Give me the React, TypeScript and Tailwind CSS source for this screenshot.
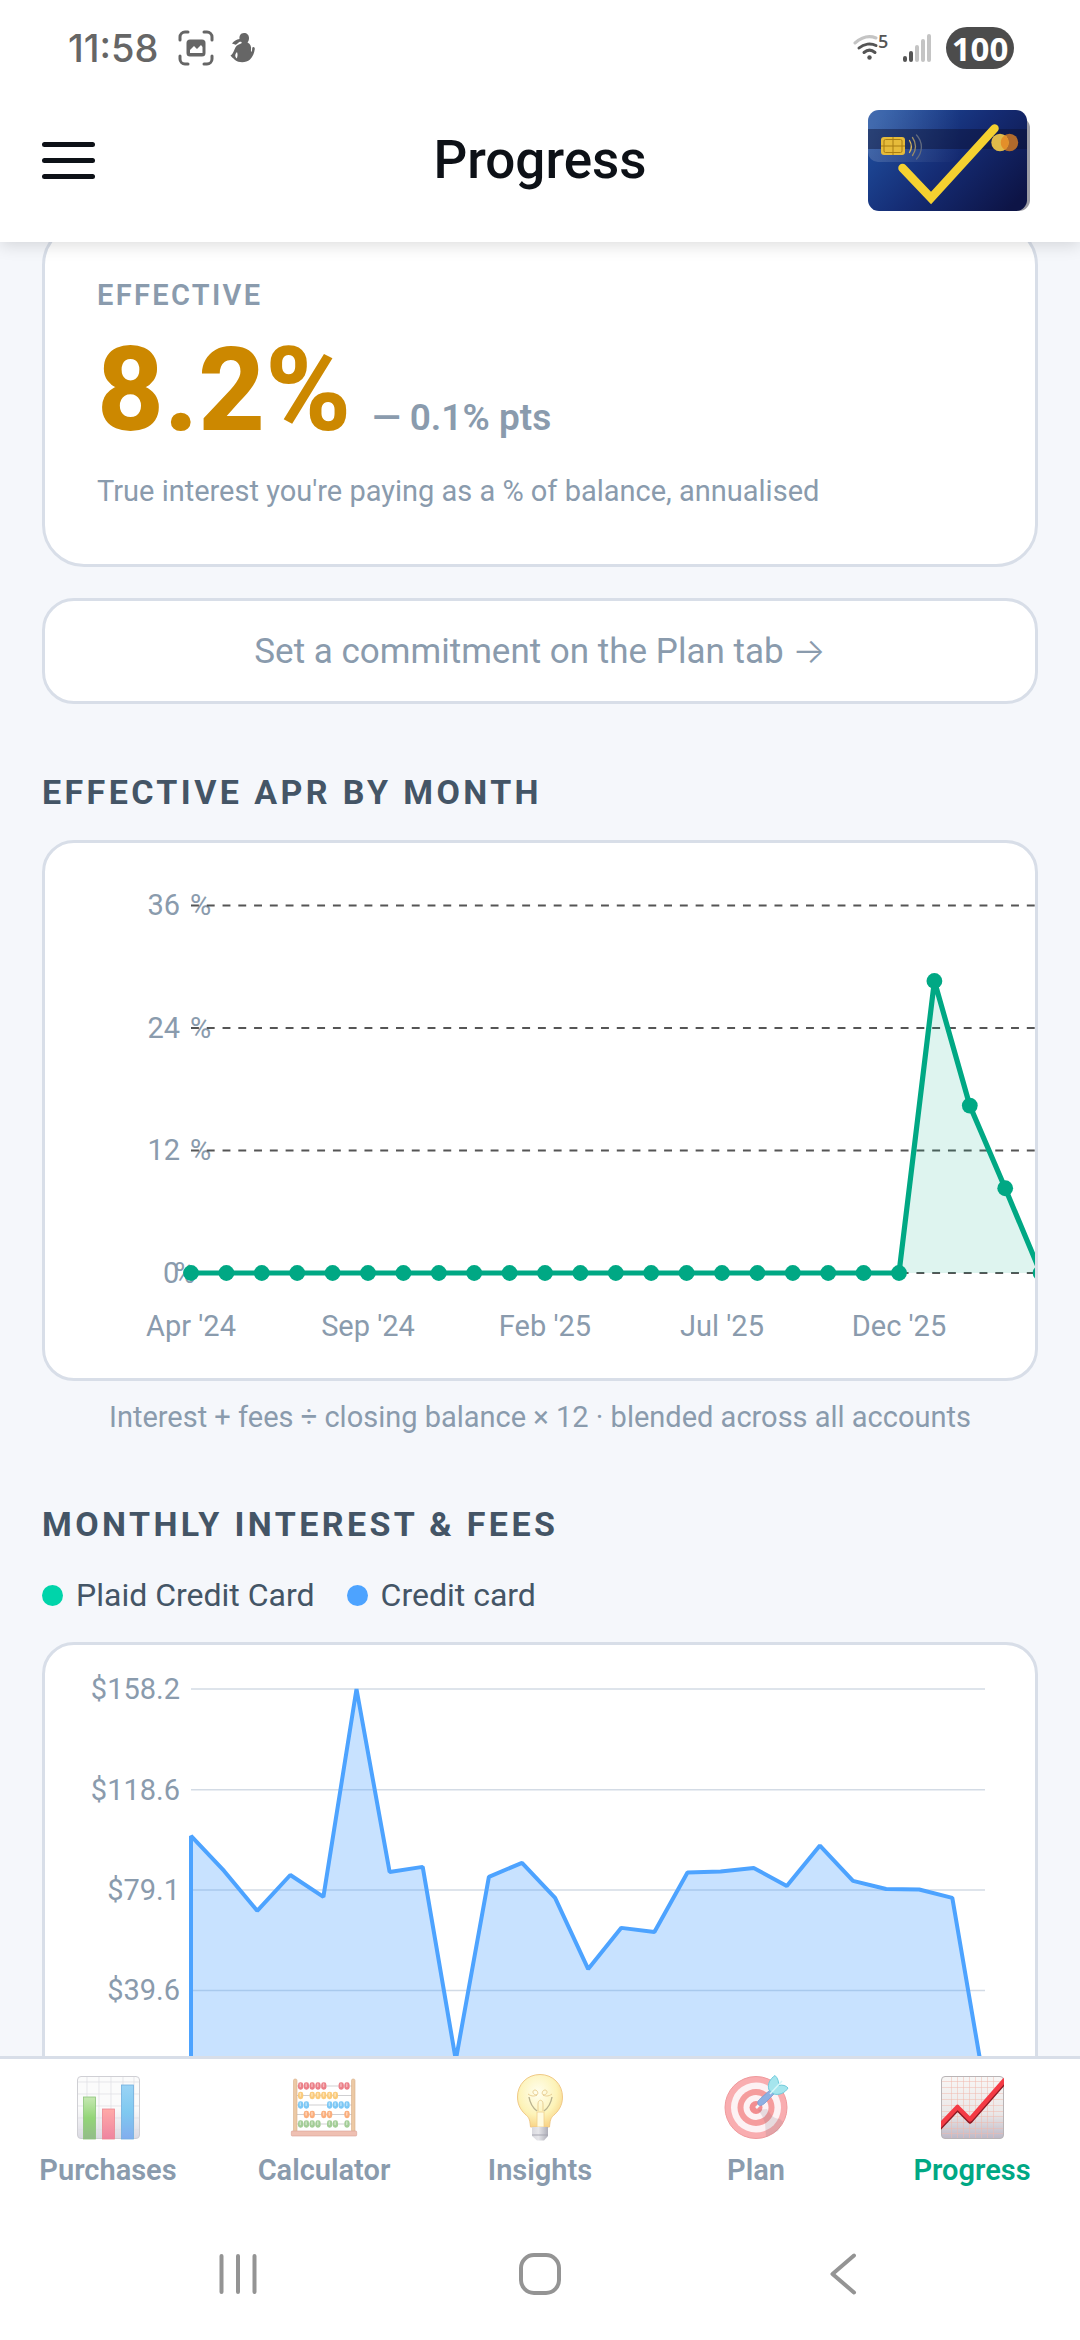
import React from 'react';

const aprByMonth = [
    0, 0, 0, 0, 0, 0, 0, 0, 0, 0, 0, 0, 0,
    0, 0, 0, 0, 0, 0, 0, 0, 28.6, 16.4, 8.3, 0,
];

const interestByMonth = [
    100.4, 86.6, 70.9, 85, 76.4, 158.2, 86.2, 88.2, 12.2, 84.3, 89.8, 76, 48,
    64.2, 62.6, 86, 86.4, 87.8, 80.7, 96.6, 82.7, 79.5, 79.3, 76, 0,
];

// ---------- Status bar ----------

const StatusBar: React.FC = () => (
    <div className="flex h-24 items-center justify-between pl-[68px] pr-[66px]">
        <div className="flex items-center gap-4 text-[#666666]">
            <span className="mr-1 font-['Inter'] text-[38px] leading-none font-medium">11:58</span>
            <svg width="36" height="36" viewBox="0 0 36 36" fill="none" aria-hidden="true">
                <path
                    d="M10 2H7a5 5 0 0 0-5 5v3M26 2h3a5 5 0 0 1 5 5v3M10 34H7a5 5 0 0 1-5-5v-3M26 34h3a5 5 0 0 0 5-5v-3"
                    stroke="currentColor"
                    strokeWidth="3"
                    strokeLinecap="round"
                />
                <rect x="8.500" y="9.500" width="19" height="17" rx="3.500" fill="currentColor" />
                <path d="M12 23v-3l4-4 3 3 4-4 1.500 2v6z" fill="#fff" />
            </svg>
            <svg width="26" height="30" viewBox="0 0 26 30" aria-hidden="true">
                <path
                    d="M14 0c3 0 5 2 5 5 0 2-.500 3-1.500 4.500 3 1.500 4 4 3.500 7.500-.200 2 .500 2.500 1 .500.300-1.500 0-2.500.500-3 1-1 2.500 0 2.300 1.500-.500 4-2 8-4.800 10.500-4 3.500-11 3.500-15 .500C3 25 1 23.500.500 22.500c2-1 3-3.500 4-6C5.500 13.500 7.500 11.500 10 11c1.500-.500 2-1 1.500-2-1.500-.500-2.500 0-4 1.500-1 1-1.500 1.500-2.500 1L2 10.500C4 8 6.500 6.500 9.500 6 9 3 10.500 0 14 0z"
                    fill="currentColor"
                />
                <path d="M7 19c-2 2-2.500 4-.500 6.500 1-1 1.500-4 .500-6.500z" fill="#fff" />
            </svg>
        </div>
        <div className="flex items-center gap-[14px] text-[#555555]">
            <svg width="36" height="44" viewBox="0 -8 36 44" fill="none" aria-hidden="true">
                <path d="M2 9c8-7 15-7.500 21-5" stroke="#c4c4c4" strokeWidth="3" strokeLinecap="round" />
                <path d="M6 14c5-4.500 12-5 17-2.500M11 18.500c3.500-3 7.500-3 11 0" stroke="currentColor" strokeWidth="3" strokeLinecap="round" />
                <circle cx="16.500" cy="23.500" r="2.200" fill="currentColor" />
                <text x="25" y="14" fontSize="18" fontWeight="600" fill="currentColor" fontFamily="Open Sans, sans-serif">5</text>
            </svg>
            <svg width="29" height="30" viewBox="0 0 29 30" strokeWidth="4" strokeLinecap="round" aria-hidden="true">
                <path d="M2 25v2M8 20v7" stroke="#555" />
                <path d="M14 14v13M20 8v19M26 3v24" stroke="#c4c4c4" />
            </svg>
            <span className="flex h-[42px] w-[68px] items-center justify-center rounded-full bg-[#4c4c4c] font-['Open_Sans'] text-[33px] leading-none font-bold text-white">
                100
            </span>
        </div>
    </div>
);

// ---------- Header ----------

const CardLogo: React.FC = () => (
    <svg width="162" height="102" viewBox="0 0 162 102" role="img" aria-label="Card logo">
        <defs>
            <linearGradient id="cardBody" x1="0" y1="0.200" x2="1" y2="0.800">
                <stop offset="0" stopColor="#1f4f9f" />
                <stop offset="0.500" stopColor="#152c74" />
                <stop offset="1" stopColor="#0d1446" />
            </linearGradient>
            <linearGradient id="cardShine" x1="0" y1="0" x2="1" y2="0">
                <stop offset="0" stopColor="#fff" stopOpacity="0.160" />
                <stop offset="1" stopColor="#fff" stopOpacity="0" />
            </linearGradient>
            <clipPath id="cardClip">
                <rect y="1" width="159" height="101" rx="11" />
            </clipPath>
        </defs>
        <rect x="6" y="8" width="156" height="94" rx="11" fill="#9c9ca4" />
        <rect y="1" width="159" height="101" rx="11" fill="url(#cardBody)" />
        <g clipPath="url(#cardClip)">
            <rect x="0" y="-10" width="92" height="63" rx="10" fill="url(#cardShine)" />
            <rect y="20" width="159" height="20" fill="#0a1030" fillOpacity="0.450" />
        </g>
        <g stroke="#a87d12" strokeWidth="1">
            <rect x="13" y="28" width="24" height="18" rx="3" fill="#e6bb3a" stroke="none" />
            <rect x="16" y="30.500" width="18" height="13" rx="1.500" fill="none" />
            <path d="M25 28v18M13 37h24" />
        </g>
        <g fill="none" strokeLinecap="round" strokeWidth="1.300">
            <path d="M41.500 31.500c2.500 4 2.500 8 0 12" stroke="#d6b65a" />
            <path d="M44.500 28.500c4 5.500 4 12.500 0 18" stroke="#9a8c66" />
            <path d="M48.500 26c6.500 7 6.500 17 0 24" stroke="#616b80" />
        </g>
        <circle cx="141.500" cy="33.500" r="8.700" fill="#b06a2c" />
        <circle cx="132" cy="33.500" r="8.700" fill="#dfba4a" />
        <path d="M136.750 26.200a8.700 8.700 0 0 1 0 14.600 8.700 8.700 0 0 1 0-14.600z" fill="#e38f2a" />
        <path d="M34.500 59 63 89 126.500 19.500" fill="none" stroke="#f5d130" strokeWidth="8.500" strokeLinecap="round" />
    </svg>
);

const Header: React.FC = () => (
    <header className="relative z-10 shrink-0 bg-white shadow-[0_3px_16px_rgba(0,0,0,0.14)]">
        <StatusBar />
        <div className="grid h-[146px] grid-cols-[1fr_auto_1fr] items-center px-[42px] pb-[18px]">
            <button type="button" aria-label="Menu" className="flex w-[53px] flex-col gap-[11px]">
                <span className="h-[5px] rounded-full bg-[#0d1117]" />
                <span className="h-[5px] rounded-full bg-[#0d1117]" />
                <span className="h-[5px] rounded-full bg-[#0d1117]" />
            </button>
            <h1 className="text-[53px] leading-[62px] font-medium text-[#0d1117]">Progress</h1>
            <div className="mr-2 justify-self-end">
                <CardLogo />
            </div>
        </div>
    </header>
);

// ---------- Charts ----------

const AprChart: React.FC = () => {
    const left = 146;
    const bottom = 430;
    const x = (i: number) => left + i * 35.4;
    const y = (v: number) => bottom - v * 10.21;
    const points = aprByMonth.map((v, i) => `${x(i)},${y(v)}`).join(' ');
    const months = ["Apr '24", "Sep '24", "Feb '25", "Jul '25", "Dec '25"];

    return (
        <svg viewBox="0 0 990 535" className="block w-full" role="img" aria-label="Effective APR by month">
            <g fill="#8a9bad" fontSize="29">
                {[36, 24, 12].map((v) => (
                    <React.Fragment key={v}>
                        <text x="135" y={y(v) + 10} textAnchor="end">{v}</text>
                        <text x="145" y={y(v) + 10}>%</text>
                    </React.Fragment>
                ))}
                <text x="118" y="440">0</text>
                <text x="129" y="440">%</text>
                {months.map((m, i) => (
                    <text key={m} x={x(i * 5)} y="493" textAnchor="middle">{m}</text>
                ))}
            </g>
            {[0, 12, 24, 36].map((v) => (
                <line key={v} x1={left} x2="990" y1={y(v)} y2={y(v)} stroke="#555" strokeWidth="2" strokeDasharray="7.900 7.870" />
            ))}
            <polygon points={`${left},${bottom} ${points}`} fill="#00a884" fillOpacity="0.130" />
            <polyline points={points} fill="none" stroke="#00a884" strokeWidth="5.200" />
            {aprByMonth.map((v, i) => (
                <circle key={i} cx={x(i)} cy={y(v)} r="7.900" fill="#00a884" />
            ))}
        </svg>
    );
};

const InterestChart: React.FC = () => {
    const left = 146;
    const bottom = 446;
    const x = (i: number) => left + i * 33.1;
    const y = (v: number) => bottom - v * 2.541;
    const points = interestByMonth.map((v, i) => `${x(i)},${y(v)}`).join(' ');

    return (
        <svg viewBox="0 0 990 500" className="block w-full" role="img" aria-label="Monthly interest and fees">
            {[158.2, 118.6, 79.1, 39.6].map((v) => (
                <g key={v}>
                    <text x="135" y={y(v) + 10} textAnchor="end" fill="#8a9bad" fontSize="29">${v}</text>
                    <line x1={left} x2="940" y1={y(v)} y2={y(v)} stroke="#d3dbe5" strokeWidth="1.500" />
                </g>
            ))}
            <polygon
                points={`${left},${bottom} ${points}`}
                fill="#4da3ff"
                fillOpacity="0.310"
                stroke="#4da3ff"
                strokeWidth="4"
                strokeLinejoin="bevel"
            />
        </svg>
    );
};

// ---------- Tab icons ----------

const PurchasesIcon: React.FC = () => (
    <svg width="72" height="72" viewBox="0 0 72 72" aria-hidden="true">
        <defs>
            <linearGradient id="pBg" x1="0" y1="0" x2="0" y2="1">
                <stop offset="0.500" stopColor="#fbfbfb" />
                <stop offset="1" stopColor="#dbdae3" />
            </linearGradient>
            <linearGradient id="pGreen" x1="0" y1="0" x2="0" y2="1">
                <stop offset="0" stopColor="#c6e8b2" />
                <stop offset="0.500" stopColor="#93d577" />
                <stop offset="1" stopColor="#93bb8a" />
            </linearGradient>
            <linearGradient id="pRed" x1="0" y1="0" x2="0" y2="1">
                <stop offset="0" stopColor="#ffaaa8" />
                <stop offset="1" stopColor="#ee84a0" />
            </linearGradient>
            <linearGradient id="pBlue" x1="0" y1="0" x2="0" y2="1">
                <stop offset="0" stopColor="#9ad3f5" />
                <stop offset="0.500" stopColor="#7fc9f0" />
                <stop offset="1" stopColor="#82adee" />
            </linearGradient>
        </defs>
        <rect x="5.500" y="4.500" width="62" height="62" rx="3.500" fill="url(#pBg)" stroke="#cfcfd4" />
        <path
            d="M15 5v61M27 5v61M39 5v61M51 5v61M62 5v61M6 10h61M6 22h61M6 34h61M6 46h61M6 58h61"
            stroke="#dedee4"
            strokeWidth="0.700"
        />
        <rect x="11.500" y="25" width="12" height="42" fill="url(#pGreen)" stroke="#8cc47b" strokeWidth="0.800" />
        <rect x="30.500" y="37" width="12" height="30" fill="url(#pRed)" stroke="#ec8590" strokeWidth="0.800" />
        <rect x="49.500" y="13" width="12" height="54" fill="url(#pBlue)" stroke="#70aede" strokeWidth="0.800" />
    </svg>
);

// Bead slots taken on each rod, from left to right
const abacusRows = [
    { y: 14, color: '#ec7f88', beads: [0, 1, 2, 3, 4, 7, 8] },
    { y: 23.5, color: '#fbcb7b', beads: [0, 2, 3, 4, 5, 6] },
    { y: 33, color: '#7cc8f6', beads: [0, 1, 5, 6, 7, 8] },
    { y: 42.5, color: '#fbae7c', beads: [1, 2, 4, 5, 8] },
    { y: 52, color: '#a3cd97', beads: [0, 1, 2, 3, 5, 6, 8] },
];

const CalculatorIcon: React.FC = () => (
    <svg width="72" height="72" viewBox="0 0 72 72" aria-hidden="true">
        {abacusRows.map((row) => (
            <g key={row.y}>
                <line x1="8" x2="64" y1={row.y} y2={row.y} stroke="#cfcfd2" strokeWidth="1.200" />
                {row.beads.map((b) => (
                    <g key={b}>
                        <rect x={10 + b * 5.8} y={row.y - 3.7} width="5.200" height="7.400" rx="2.400" fill={row.color} />
                        <rect x={11.6 + b * 5.8} y={row.y - 2.7} width="1.500" height="4" rx="0.700" fill="#fff" fillOpacity="0.450" />
                    </g>
                ))}
            </g>
        ))}
        <rect x="5.500" y="7" width="3.500" height="53" rx="1.500" fill="#ecc9a4" stroke="#d8ae8a" strokeWidth="0.600" />
        <rect x="63.500" y="7" width="3.500" height="53" rx="1.500" fill="#ecc9a4" stroke="#d8ae8a" strokeWidth="0.600" />
        <rect x="3.300" y="59" width="65.400" height="5" rx="1" fill="#efc0b2" stroke="#d9a093" strokeWidth="0.600" />
    </svg>
);

const InsightsIcon: React.FC = () => (
    <svg width="72" height="72" viewBox="0 0 72 72" aria-hidden="true">
        <defs>
            <radialGradient id="bulb" cx="0.450" cy="0.350" r="0.650">
                <stop offset="0" stopColor="#fffef0" />
                <stop offset="0.650" stopColor="#fdf3b8" />
                <stop offset="1" stopColor="#f9d588" />
            </radialGradient>
            <linearGradient id="bulbBase" x1="0" y1="0" x2="1" y2="0">
                <stop offset="0" stopColor="#d8d8de" />
                <stop offset="0.400" stopColor="#e6e6ea" />
                <stop offset="1" stopColor="#aeaeb8" />
            </linearGradient>
        </defs>
        <path
            d="M36 2.500C23 2.500 13.500 12.500 13.500 25c0 9 4.500 14.500 9 18.500 3 2.500 3.500 5.500 4 11.500h19c.500-6 1-9 4-11.500 4.500-4 9-9.500 9-18.500C58.500 12.500 49 2.500 36 2.500z"
            fill="url(#bulb)"
            stroke="#f0c987"
        />
        <path d="M33 40h7v15h-7z" fill="#fffbe0" stroke="#f1d18a" strokeWidth="0.800" />
        <path d="M24 22c4 3 7 2 9 1-5 0-5-5-2-5s4 5 1 5M48 22c-4 3-7 2-9 1 5 0 5-5 2-5s-4 5-1 5M34 32c0-5 5-5 5 0v7M34 32v7" fill="none" stroke="#e9cf94" />
        <path d="M25 25c1 6 4 11 8 14M48 25c-1 6-4 11-8 14" fill="none" stroke="#b9b28f" strokeWidth="1.400" />
        <path d="M28 55h16v9l-4 4.500h-7L28 64z" fill="url(#bulbBase)" />
        <path d="M28 63h16" stroke="#a5a5b0" />
    </svg>
);

const PlanIcon: React.FC = () => (
    <svg width="72" height="72" viewBox="0 0 72 72" aria-hidden="true">
        <circle cx="36" cy="35.500" r="31" fill="#f9adb0" stroke="#ef9a9d" />
        <circle cx="36" cy="35.500" r="25" fill="#fdf2f4" />
        <circle cx="36" cy="35.500" r="18.500" fill="#f59c9d" />
        <circle cx="36" cy="35.500" r="12.500" fill="#fdf2f4" />
        <circle cx="36" cy="35.500" r="6.500" fill="#f28d90" />
        <path d="M38 38l9-1c4 6 7 10 13 10l3 3-5 9-12 6-1-14c-2-6-3-8-7-13z" fill="#8a7f88" fillOpacity="0.200" />
        <path d="M36 36l6-6" stroke="#f7f7fa" strokeWidth="2.500" />
        <path d="M38 32c-1-3 1-4 3-6l9-8 4 4-9 9c-2 2-6 4-7 1z" fill="#8fb0e2" stroke="#7a9bd2" strokeWidth="0.800" />
        <path d="M49 18c-2-6 1-11 6-14.500 3 2.500 4 7 3.500 10 4-1 7.500 0 9.500 2.500-3 5-9 7.500-14 6z" fill="#a5e5ed" stroke="#70cbdc" />
        <path d="M50 22l12-13" stroke="#d6f6f8" strokeWidth="1.500" />
    </svg>
);

const ProgressIcon: React.FC = () => (
    <svg width="72" height="72" viewBox="0 0 72 72" aria-hidden="true">
        <defs>
            <linearGradient id="gBg" x1="0" y1="0" x2="0" y2="1">
                <stop offset="0" stopColor="#f8f6f5" />
                <stop offset="0.600" stopColor="#eae7e7" />
                <stop offset="1" stopColor="#bdb8c6" />
            </linearGradient>
            <clipPath id="gClip">
                <rect x="5" y="4" width="63" height="63" rx="4" />
            </clipPath>
        </defs>
        <rect x="5.500" y="4.500" width="62" height="62" rx="3.500" fill="url(#gBg)" stroke="#b9b4b6" />
        <path
            d="M15.500 5v61M21.500 5v61M27.500 5v61M33.500 5v61M39.500 5v61M45.500 5v61M51.500 5v61M57.500 5v61M6 9.500h61M6 15.500h61M6 21.500h61M6 27.500h61M6 33.500h61M6 39.500h61M6 44.500h61M6 50.500h61M6 56.500h61M6 61.500h61"
            stroke="#f0b9ac"
            strokeWidth="0.500"
        />
        <g clipPath="url(#gClip)" fill="none" strokeWidth="4.500" strokeLinejoin="round">
            <path d="M3 56.500 21.500 37 34 49.500 70 8.500" stroke="#8e1a24" />
            <path d="M3 54.500 21.500 35 34 47.500 70 6.500" stroke="#f43b45" />
        </g>
    </svg>
);

const tabs = [
    { label: 'Purchases', icon: <PurchasesIcon />, active: false },
    { label: 'Calculator', icon: <CalculatorIcon />, active: false },
    { label: 'Insights', icon: <InsightsIcon />, active: false },
    { label: 'Plan', icon: <PlanIcon />, active: false },
    { label: 'Progress', icon: <ProgressIcon />, active: true },
];

const TabBar: React.FC = () => (
    <nav className="grid shrink-0 grid-cols-5 border-t-[3px] border-[#d8dee8] bg-white pt-[13px] pb-[27px]">
        {tabs.map((tab) => (
            <button
                key={tab.label}
                type="button"
                aria-current={tab.active ? 'page' : undefined}
                className={`flex flex-col items-center gap-[9px] ${tab.active ? 'text-[#00a884]' : 'text-[#8a9bad]'}`}
            >
                {tab.icon}
                <span className="text-[29px] leading-[34px] font-semibold">{tab.label}</span>
            </button>
        ))}
    </nav>
);

const SystemBar: React.FC = () => (
    <div className="grid shrink-0 grid-cols-3 justify-items-center bg-white px-[87px] pt-[39px] pb-[45px] text-[#949494]">
        <button type="button" aria-label="Recent apps">
            <svg width="42" height="42" viewBox="0 0 42 42" stroke="currentColor" strokeWidth="4" strokeLinecap="round">
                <path d="M4.500 3v36M21 3v36M37.500 3v36" />
            </svg>
        </button>
        <button type="button" aria-label="Home">
            <svg width="42" height="42" viewBox="0 0 42 42" fill="none" stroke="currentColor" strokeWidth="4">
                <rect x="2" y="2" width="38" height="38" rx="13" />
            </svg>
        </button>
        <button type="button" aria-label="Back">
            <svg width="42" height="42" viewBox="0 0 42 42" fill="none" stroke="currentColor" strokeWidth="4" strokeLinecap="round" strokeLinejoin="round">
                <path d="M33 2.500 11.500 21 33 39.500" />
            </svg>
        </button>
    </div>
);

// ---------- Page ----------

const SectionTitle: React.FC<{ children: React.ReactNode }> = ({ children }) => (
    <h2 className="mt-[68px] mb-7 text-[34px] leading-10 font-bold tracking-widest text-[#445566]">{children}</h2>
);

const LegendItem: React.FC<{ dot: string; label: string }> = ({ dot, label }) => (
    <li className="flex items-center gap-[13px]">
        <span className={`size-[21px] rounded-full ${dot}`} />
        {label}
    </li>
);

export default function App() {
    return (
        <div className="flex h-screen flex-col bg-[#f5f7fb] font-['Roboto',sans-serif]">
            <Header />

            <main className="min-h-0 flex-1 overflow-hidden px-[42px]">
                <section className="-mt-[19px] rounded-[42px] border-[3px] border-[#d8dee8] bg-white px-[52px] pt-[52px] pb-[54px]">
                    <p className="text-[29px] leading-[34px] font-semibold tracking-[0.08em] text-[#8a9bad]">EFFECTIVE</p>
                    <div className="mt-[10px] flex items-baseline gap-[21px]">
                        <span className="text-[116px] leading-[136px] font-extrabold text-[#cc8800]">8.2%</span>
                        <span className="text-[37px] font-semibold text-[#8a9bad]">— 0.1% pts</span>
                    </div>
                    <p className="mt-[14px] text-[29px] leading-[38px] text-[#8a9bad]">
                        True interest you're paying as a % of balance, annualised
                    </p>
                </section>

                <button
                    type="button"
                    className="mt-[31px] w-full rounded-[32px] border-[3px] border-[#d8dee8] bg-white py-[30px] text-[35px] leading-[39px] text-[#8a9bad]"
                >
                    Set a commitment on the Plan tab <span className="font-['Inter'] font-light">→</span>
                </button>

                <SectionTitle>EFFECTIVE APR BY MONTH</SectionTitle>
                <div className="overflow-hidden rounded-[32px] border-[3px] border-[#d8dee8] bg-white">
                    <AprChart />
                </div>
                <p className="mt-[17px] text-center text-[29px] leading-[38px] text-[#8a9bad]">
                    Interest + fees ÷ closing balance × 12 · blended across all accounts
                </p>

                <SectionTitle>MONTHLY INTEREST &amp; FEES</SectionTitle>
                <ul className="flex gap-8 text-[32px] leading-[46px] text-[#445566]">
                    <LegendItem dot="bg-[#00d4aa]" label="Plaid Credit Card" />
                    <LegendItem dot="bg-[#4da3ff]" label="Credit card" />
                </ul>
                <div className="mt-6 overflow-hidden rounded-[32px] border-[3px] border-[#d8dee8] bg-white">
                    <InterestChart />
                </div>
            </main>

            <TabBar />
            <SystemBar />
        </div>
    );
}
